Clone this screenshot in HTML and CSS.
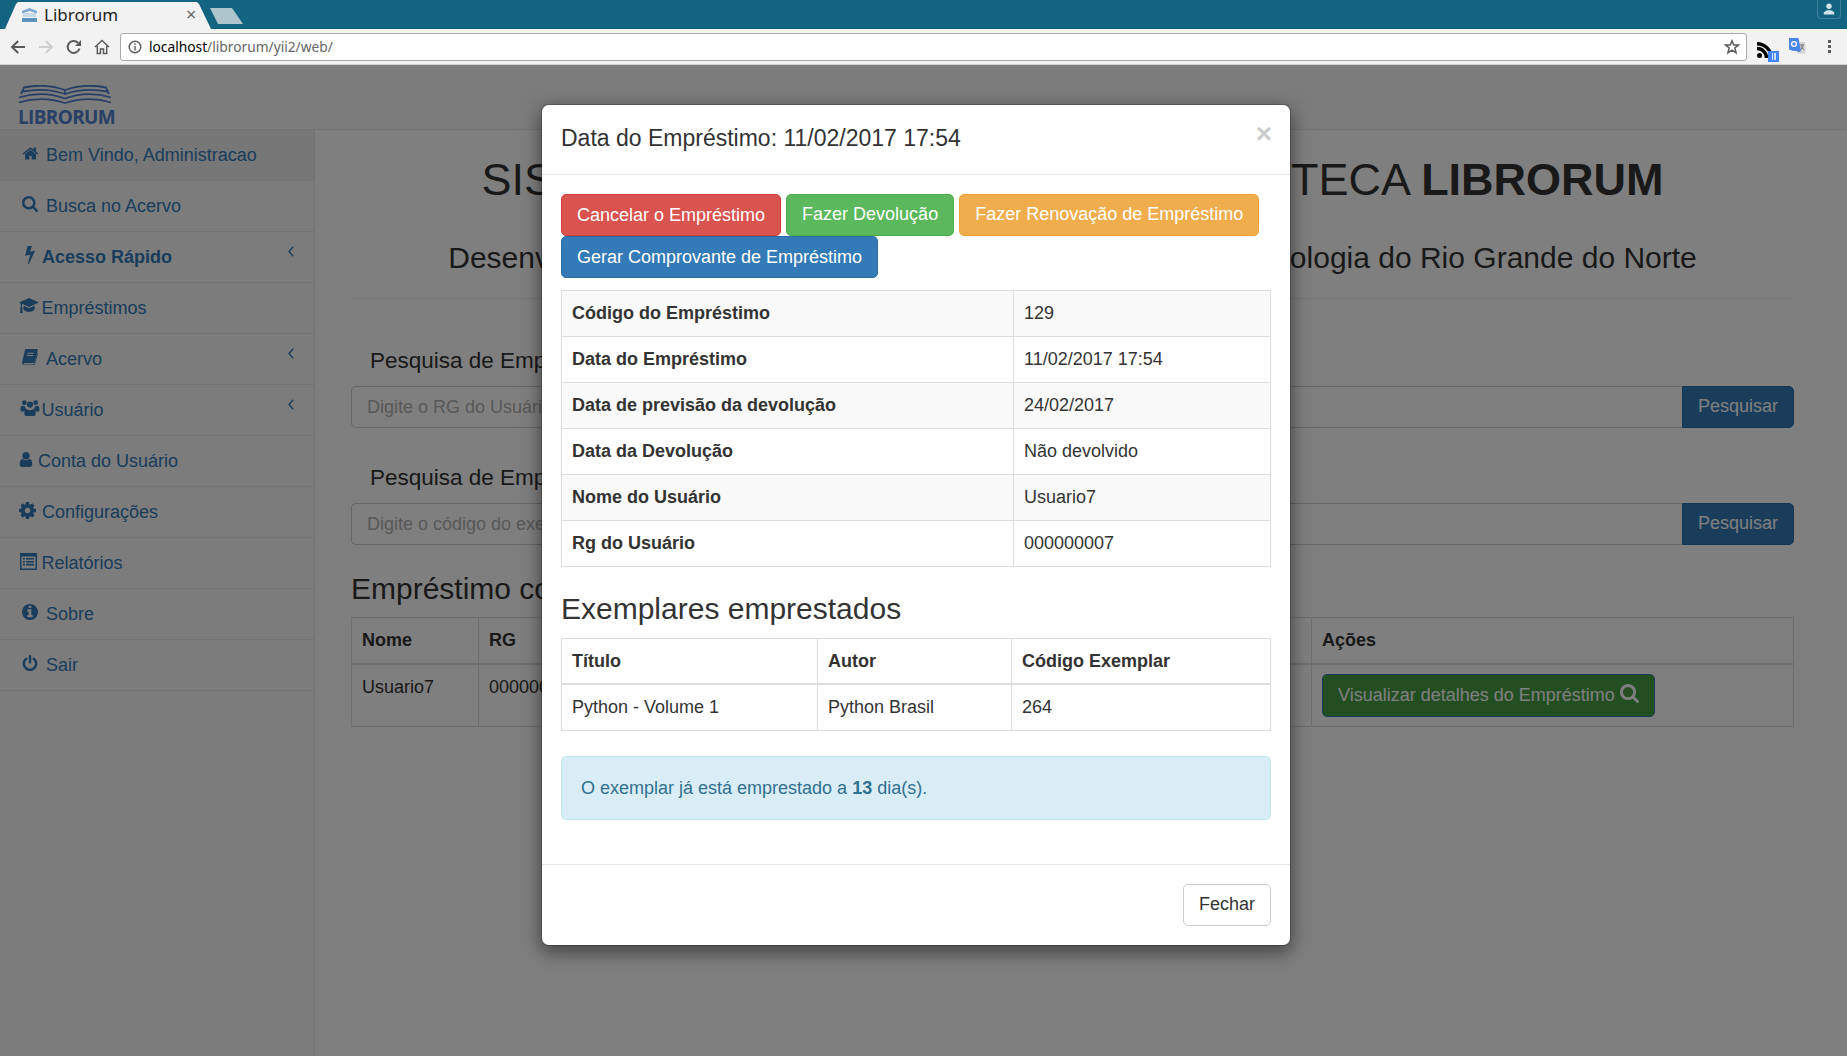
FILE: index.html
```html
<!DOCTYPE html>
<html lang="pt-BR">
<head>
<meta charset="utf-8">
<title>Librorum</title>
<link rel="stylesheet" href="styles.css">
</head>
<body>
<svg class="defs" width="0" height="0" aria-hidden="true">
  <symbol id="i-home" viewBox="0 0 1792 1792"><path d="M1472 992v480q0 26-19 45t-45 19h-384v-384h-256v384h-384q-26 0-45-19t-19-45v-480q0-1 .5-3t.5-3l575-474 575 474q1 2 1 6zm223-69l-62 74q-8 9-21 11h-3q-13 0-21-7l-692-577-692 577q-12 8-24 7-13-2-21-11l-62-74q-8-10-7-23.5t11-21.5l719-599q32-26 76-26t76 26l244 204v-195q0-14 9-23t23-9h192q14 0 23 9t9 23v408l219 182q10 8 11 21.5t-7 23.5z"/></symbol>
  <symbol id="i-search" viewBox="64 128 1664 1664"><path d="M1216 832q0-185-131.5-316.5t-316.5-131.5-316.5 131.5-131.5 316.5 131.5 316.5 316.5 131.5 316.5-131.5 131.5-316.5zm512 832q0 52-38 90t-90 38q-54 0-90-38l-343-342q-179 124-399 124-143 0-273.5-55.5t-225-150-150-225-55.5-273.5 55.5-273.5 150-225 225-150 273.5-55.5 273.5 55.5 225 150 150 225 55.5 273.5q0 220-124 399l343 343q37 37 37 90z"/></symbol>
  <symbol id="i-bolt" viewBox="440 120 910 1680"><path d="M1333 566q18 20 7 44l-540 1157q-13 25-42 25-4 0-14-2-17-5-25.5-19t-4.5-30l197-808-406 101q-4 1-12 1-18 0-31-11-18-15-13-39l201-825q4-14 16-23t28-9h328q19 0 32 12.5t13 29.5q0 8-5 18l-171 463 396-98q8-2 12-2 19 0 34 15z"/></symbol>
  <symbol id="i-cap" viewBox="0 0 20 16"><path d="M10 0 20 4.4 10 9 3.6 6 3 6.4V9.6c.5.2.7.6.7 1 0 .4-.2.7-.5.9L3.9 15H.9l.7-3.5c-.3-.2-.5-.5-.5-.9 0-.4.2-.8.6-1V5.600L0 4.400ZM4.600 7.700 10 10.200l5.500-2.500.2 2.900C15.700 12.400 13 14 10 14S4.400 12.400 4.400 10.600Z"/></symbol>
  <symbol id="i-book" viewBox="0 0 17 17"><path fill-rule="evenodd" d="M4.300 0H15.500C16.500 0 17 .8 16.700 1.700L13.500 13.300C13.100 14.500 12.200 15 11 15H2.500C1.900 15 1.500 15.300 1.500 15.700 1.500 16.200 2 16.400 2.500 16.400H11.500C12.300 16.400 13 16 13.300 15L16.300 4 17 4.500 14 15.300C13.700 16.300 12.800 17 11.700 17H2.300C1 17 0 16.200 0 15 0 14.500.1 14 .2 13.500L3 1.500C3.200.6 3.600 0 4.300 0ZM6 4 5.700 5H12.500L12.800 4ZM5.300 6.500 5 7.500H11.800L12.100 6.500Z"/></symbol>
  <symbol id="i-users" viewBox="0 0 20 17"><circle cx="4" cy="2.800" r="2.500"/><circle cx="16" cy="2.800" r="2.500"/><circle cx="10" cy="4.800" r="3.300"/><path d="M0 9.500C0 7.500.8 6 2.300 6.200 3 6.600 3.800 6.800 4.700 6.600 4.800 8 5.400 9 6.300 9.800 5 10.300 4.300 11.200 4 12.300H1.200C.4 12.300 0 11.600 0 10.500ZM20 9.500C20 7.500 19.200 6 17.700 6.200 17 6.600 16.200 6.800 15.300 6.600 15.200 8 14.600 9 13.700 9.800 15 10.300 15.700 11.200 16 12.300H18.800C19.600 12.300 20 11.600 20 10.500ZM6.500 9.700C7.500 10.500 8.700 10.900 10 10.900S12.500 10.500 13.500 9.700C15 9.700 16 11.300 16 14.300 16 16 15.300 17 14 17H6C4.700 17 4 16 4 14.300 4 11.300 5 9.700 6.500 9.700Z"/></symbol>
  <symbol id="i-user" viewBox="256 128 1280 1536"><path d="M1536 1399q0 109-62.5 187t-150.5 78h-854q-88 0-150.5-78t-62.5-187q0-85 8.5-160.5t31.5-152 58.5-131 94-89 134.5-34.5q131 128 313 128t313-128q76 0 134.5 34.500t94 89 58.500 131 31.500 152 8.500 160.500zm-256-887q0 159-112.500 271.500t-271.500 112.500-271.500-112.500-112.500-271.500 112.500-271.500 271.500-112.500 271.500 112.500 112.500 271.500z"/></symbol>
  <symbol id="i-cog" viewBox="128 128 1536 1536"><path d="M1152 896q0-106-75-181t-181-75-181 75-75 181 75 181 181 75 181-75 75-181zm512-109v222q0 12-8 23t-20 13l-185 28q-19 54-39 91 35 50 107 138 10 12 10 25t-9 23q-27 37-99 108t-94 71q-12 0-26-9l-138-108q-44 23-91 38-16 136-29 186-7 28-36 28h-222q-14 0-24.500-8.500t-11.500-21.500l-28-184q-49-16-90-37l-141 107q-10 9-25 9-14 0-25-11-126-114-165-168-7-10-7-23 0-12 8-23 15-21 51-66.500t54-70.500q-27-50-41-99l-183-27q-13-2-21-12.500t-8-23.500v-222q0-12 8-23t19-13l186-28q14-46 39-92-40-57-107-138-10-12-10-24 0-10 9-23 26-36 98.500-107.500t94.500-71.500q13 0 26 10l138 107q44-23 91-38 16-136 29-186 7-28 36-28h222q14 0 24.500 8.500t11.500 21.500l28 184q49 16 90 37l142-107q9-9 24-9 13 0 25 10 129 119 165 170 7 8 7 22 0 12-8 23-15 21-51 66.500t-54 70.500q26 50 41 98l183 28q13 2 21 12.500t8 23.500z"/></symbol>
  <symbol id="i-list" viewBox="0 0 17 17"><path fill-rule="evenodd" d="M0 0H17V17H0ZM1.500 3.500V15.500H15.500V3.500ZM3 5H5V6.600H3ZM6 5H14V6.600H6ZM3 7.900H5V9.500H3ZM6 7.900H14V9.500H6ZM3 10.800H5V12.400H3ZM6 10.800H14V12.400H6Z"/></symbol>
  <symbol id="i-info" viewBox="128 128 1536 1536"><path d="M1152 1376v-160q0-14-9-23t-23-9h-96v-512q0-14-9-23t-23-9h-320q-14 0-23 9t-9 23v160q0 14 9 23t23 9h96v320h-96q-14 0-23 9t-9 23v160q0 14 9 23t23 9h448q14 0 23-9t9-23zm-128-896v-160q0-14-9-23t-23-9h-192q-14 0-23 9t-9 23v160q0 14 9 23t23 9h192q14 0 23-9t9-23zm640 416q0 209-103 385.500t-279.500 279.500-385.500 103-385.500-103-279.500-279.500-103-385.500 103-385.500 279.500-279.500 385.500-103 385.500 103 279.500 279.500 103 385.500z"/></symbol>
  <symbol id="i-power" viewBox="128 0 1536 1664"><path d="M1664 896q0 156-61 298t-164 245-245 164-298 61-298-61-245-164-164-245-61-298q0-182 80.500-343t226.500-270q43-32 95.500-25t83.500 50q32 42 24.500 94.500t-49.500 84.500q-98 74-151.500 181t-53.500 228q0 104 40.500 198.500t109.500 163.500 163.500 109.500 198.500 40.500 198.500-40.500 163.500-109.500 109.500-163.500 40.500-198.500q0-121-53.500-228t-151.500-181q-42-32-49.500-84.500t24.500-94.500q31-43 84-50t95 25q146 109 226.500 270t80.500 343zm-640-768v640q0 52-38 90t-90 38-90-38-38-90v-640q0-52 38-90t90-38 90 38 38 90z"/></symbol>
  <symbol id="i-chev" viewBox="0 0 6 11"><path d="M5.200.7.900 5.500 5.200 10.300" fill="none" stroke="currentColor" stroke-width="1.300"/></symbol>
</svg>

<header class="chrome">
  <div class="tabstrip">
    <div class="tab">
      <svg class="favicon" viewBox="0 0 17 17"><path d="M1 5 8.500 2 16 5V7.500L8.500 5 1 7.500Z" fill="#7aa7cf"/><path d="M2 8H15M2 10H15" stroke="#9dbfdc" stroke-width="1.200"/><path d="M1 12H16V16H1Z" fill="#5f91bd"/></svg>
      <span class="tab-title">Librorum</span>
      <span class="tab-close">×</span>
    </div>
    <div class="newtab"></div>
    <div class="profile">
      <svg viewBox="0 0 12 12" width="12" height="12"><circle cx="6" cy="3.200" r="2.700" fill="#d3e2e8"/><path d="M.8 11.500V9.300L4 7.200H8L11.200 9.300V11.500Z" fill="#d3e2e8"/></svg>
    </div>
  </div>
  <div class="toolbar">
    <svg class="tb-ic tb-first" viewBox="0 0 16 16"><path d="M15 8H2.500M8.200 2 2 8l6.200 6" fill="none" stroke="#5a5a5a" stroke-width="2"/></svg>
    <svg class="tb-ic" viewBox="0 0 16 16"><path d="M1 8H13.500M7.800 2 14 8l-6.200 6" fill="none" stroke="#cfcfcf" stroke-width="2"/></svg>
    <svg class="tb-ic" viewBox="0 0 16 16"><path d="M13.500 9.500A6 6 0 1 1 12 3.700" fill="none" stroke="#5a5a5a" stroke-width="2"/><path d="M15 1V7H9Z" fill="#5a5a5a"/></svg>
    <svg class="tb-ic tb-home" viewBox="0 0 16 16"><path d="M1 8 8 1.500 15 8M3.300 7V14.500H6.500V10H9.500V14.500H12.700V7" fill="none" stroke="#5a5a5a" stroke-width="1.500"/></svg>
    <div class="omnibox">
      <svg class="omni-info" viewBox="0 0 14 14"><circle cx="7" cy="7" r="5.800" fill="none" stroke="#5a5a5a" stroke-width="1.400"/><path d="M6.300 6H7.700V10.500H6.300ZM6.300 3.300H7.700V4.800H6.300Z" fill="#5a5a5a"/></svg>
      <span class="url"><span class="url-host">localhost</span>/librorum/yii2/web/</span>
      <svg class="omni-star" viewBox="0 0 16 16"><path d="M8 1.800 9.800 6H14.500L10.800 9 12.100 13.800 8 11.100 3.900 13.800 5.200 9 1.500 6H6.200Z" fill="none" stroke="#5a5a5a" stroke-width="1.500"/></svg>
    </div>
    <div class="ext-rss">
      <svg viewBox="0 0 16 16" width="16" height="16"><circle cx="2.500" cy="13.500" r="2.500"/><path d="M0 6.500A9.500 9.500 0 0 1 9.500 16M0 1.700A14.300 14.300 0 0 1 14.300 16" fill="none" stroke="#000" stroke-width="3.400"/></svg>
      <span class="ext-badge"><span class="ext-bar"></span><span class="ext-bar"></span></span>
    </div>
    <svg class="ext-tr" viewBox="0 0 17 17"><path d="M9 4H16.500V15.500H9Z" fill="#d5d5d5"/><path d="M11 7H15M13 6V7.500M11.500 12 14.500 7.500M12 8 15 12" stroke="#777" fill="none"/><path d="M0 0H9.500L12 13H4.500L0 11.500Z" fill="#4a86e8"/><path d="M8 14.500 9 13H12Z" fill="#3568b8"/><circle cx="5" cy="6" r="2.400" fill="none" stroke="#fff" stroke-width="1.300"/></svg>
    <div class="menu-dots"><i></i><i></i><i></i></div>
  </div>
</header>

<div class="app">
  <div class="navbar">
    <div class="logo">
      <svg class="logo-book" viewBox="0 0 94 19"><path d="M3 9 6 2.500C20-.5 34 .5 47 5 60 .5 74-.5 88 2.500L91 9M47 5V9M5 6.500C20 3.500 34 4.500 47 9 60 4.500 74 3.500 89 6.500M1 12.500C16 8 33 8.500 47 13.500 61 8.500 78 8 93 12.500" fill="none" stroke="#5080cc" stroke-width="1.800"/><path d="M1 17.500C16 13 33 13.500 47 18 61 13.500 78 13 93 17.500" fill="none" stroke="#5080cc" stroke-width="1.800"/></svg>
      <span class="logo-text">LIBRORUM</span>
    </div>
  </div>
  <div class="layout">
    <nav class="sidebar">
      <a class="nav-item nav-active"><svg class="ic ic-home"><use href="#i-home"/></svg>Bem Vindo, Administracao</a>
      <a class="nav-item"><svg class="ic ic-search"><use href="#i-search"/></svg>Busca no Acervo</a>
      <a class="nav-item nav-bold"><svg class="ic ic-bolt"><use href="#i-bolt"/></svg>Acesso Rápido<svg class="chev"><use href="#i-chev"/></svg></a>
      <a class="nav-item"><svg class="ic ic-cap"><use href="#i-cap"/></svg>Empréstimos</a>
      <a class="nav-item"><svg class="ic ic-book"><use href="#i-book"/></svg>Acervo<svg class="chev"><use href="#i-chev"/></svg></a>
      <a class="nav-item"><svg class="ic ic-users"><use href="#i-users"/></svg>Usuário<svg class="chev"><use href="#i-chev"/></svg></a>
      <a class="nav-item"><svg class="ic ic-user"><use href="#i-user"/></svg>Conta do Usuário</a>
      <a class="nav-item"><svg class="ic ic-cog"><use href="#i-cog"/></svg>Configurações</a>
      <a class="nav-item"><svg class="ic ic-list"><use href="#i-list"/></svg>Relatórios</a>
      <a class="nav-item"><svg class="ic ic-info"><use href="#i-info"/></svg>Sobre</a>
      <a class="nav-item"><svg class="ic ic-power"><use href="#i-power"/></svg>Sair</a>
    </nav>
    <main class="main">
      <h1 class="title"><span class="title-lead">SISTEMA GERENCIADOR DE </span>BIBLIOTECA <b>LIBRORUM</b></h1>
      <h3 class="subtitle">Desenvolvido no Instituto Federal de Educação, Ciência e Tecnologia do Rio Grande do Norte</h3>
      <hr class="rule">
      <h4 class="search-label">Pesquisa de Empréstimo por RG</h4>
      <div class="search-group">
        <input class="search-input" placeholder="Digite o RG do Usuário">
        <button class="search-btn">Pesquisar</button>
      </div>
      <h4 class="search-label search-label-2">Pesquisa de Empréstimo por Exemplar</h4>
      <div class="search-group">
        <input class="search-input" placeholder="Digite o código do exemplar">
        <button class="search-btn">Pesquisar</button>
      </div>
      <h3 class="loan-title">Empréstimo com o Usuário</h3>
      <table class="bg-table">
        <colgroup><col class="c-nome"><col class="c-rg"><col class="c-mid"><col class="c-acoes"></colgroup>
        <thead><tr><th>Nome</th><th>RG</th><th>Data</th><th>Ações</th></tr></thead>
        <tbody><tr><td>Usuario7</td><td>000000007</td><td>11/02/2017</td><td class="td-action"><button class="view-btn">Visualizar detalhes do Empréstimo <svg class="view-ic"><use href="#i-search"/></svg></button></td></tr></tbody>
      </table>
    </main>
  </div>

  <div class="backdrop">
    <section class="modal">
      <div class="modal-header">
        <h4 class="modal-title">Data do Empréstimo: 11/02/2017 17:54</h4>
        <span class="close">×</span>
      </div>
      <div class="modal-body">
        <div class="actions">
          <button class="btn btn-danger">Cancelar o Empréstimo</button>
          <button class="btn btn-success">Fazer Devolução</button>
          <button class="btn btn-warning">Fazer Renovação de Empréstimo</button>
          <button class="btn btn-primary">Gerar Comprovante de Empréstimo</button>
        </div>
        <table class="tbl tbl-detail">
          <colgroup><col class="c-key"><col></colgroup>
          <tbody>
            <tr><th>Código do Empréstimo</th><td>129</td></tr>
            <tr><th>Data do Empréstimo</th><td>11/02/2017 17:54</td></tr>
            <tr><th>Data de previsão da devolução</th><td>24/02/2017</td></tr>
            <tr><th>Data da Devolução</th><td>Não devolvido</td></tr>
            <tr><th>Nome do Usuário</th><td>Usuario7</td></tr>
            <tr><th>Rg do Usuário</th><td>000000007</td></tr>
          </tbody>
        </table>
        <h3 class="modal-h3">Exemplares emprestados</h3>
        <table class="tbl tbl-copies">
          <colgroup><col class="c-titulo"><col class="c-autor"><col></colgroup>
          <thead><tr><th>Título</th><th>Autor</th><th>Código Exemplar</th></tr></thead>
          <tbody><tr><td>Python - Volume 1</td><td>Python Brasil</td><td>264</td></tr></tbody>
        </table>
        <div class="alert">O exemplar já está emprestado a <b>13</b> dia(s).</div>
      </div>
      <div class="modal-footer">
        <button class="btn btn-default">Fechar</button>
      </div>
    </section>
  </div>
</div>
</body>
</html>
```

FILE: styles.css
```css
* { box-sizing: border-box; }
html, body { margin: 0; height: 100%; }
body {
  width: 1847px;
  height: 1056px;
  overflow: hidden;
  background: #fff;
  color: #333;
  font-family: "Liberation Sans", Arial, sans-serif;
  font-size: 18px;
  line-height: 25px;
  display: flex;
  flex-direction: column;
}
.defs { position: absolute; }

/* browser chrome */
.chrome { height: 65px; flex: none; font-family: "Noto Sans", sans-serif; }
.tabstrip { height: 29px; background: #136480; display: flex; align-items: flex-end; padding-left: 5px; }
.tab {
  width: 206px; height: 27px; background: #f2f2f2;
  clip-path: polygon(0 100%, 11px 2px, 13px 0, 192px 0, 194px 2px, 100% 100%);
  display: flex; align-items: center; padding: 0 0 2px 16px;
}
.favicon { width: 17px; height: 17px; flex: none; }
.tab-title { margin-left: 6px; font-size: 17px; color: #222; width: 142px; }
.tab-close { font-size: 18px; color: #666; }
.newtab { width: 33px; height: 16px; margin: 0 0 5px -1px; background: #afc5ce; clip-path: polygon(0 0, 22px 0, 33px 100%, 8px 100%); }
.profile {
  margin: 0 6px 0 auto; align-self: flex-start; width: 24px; height: 19px;
  border: 1px solid #3f8098; border-top: 0; border-radius: 0 0 4px 4px;
  display: flex; align-items: center; justify-content: center;
}
.toolbar { height: 36px; background: #f2f2f2; border-bottom: 1px solid #d0d0d0; display: flex; align-items: center; }
.tb-ic { width: 16px; height: 16px; margin-right: 12px; flex: none; }
.tb-first { margin-left: 10px; }
.tb-home { margin-right: 10px; }
.omnibox {
  width: 1627px; height: 28px; background: #fff; border: 1px solid #aaa; border-radius: 3px;
  display: flex; align-items: center; padding-left: 7px; flex: none;
}
.omni-info { width: 14px; height: 14px; flex: none; }
.url { margin-left: 7px; font-size: 13.750px; color: #666; flex: 1; white-space: nowrap; line-height: 18px; }
.url-host { color: #000; }
.omni-star { width: 16px; height: 16px; margin-right: 6px; flex: none; }
.ext-rss { position: relative; width: 16px; height: 16px; margin-left: 10px; flex: none; }
.ext-badge { position: absolute; left: 11px; top: 12px; width: 11px; height: 11px; background: #4285f4; display: flex; gap: 1px; justify-content: center; align-items: center; }
.ext-bar { width: 1.500px; height: 7px; background: #cfe0fb; }
.ext-tr { width: 17px; height: 17px; margin-left: 16px; flex: none; }
.menu-dots { margin-left: 22px; display: flex; flex-direction: column; gap: 2px; }
.menu-dots i { width: 3px; height: 3px; background: #5a5a5a; display: block; }

/* app */
.app { position: relative; flex: 1; display: flex; flex-direction: column; min-height: 0; }
.navbar { height: 65px; flex: none; background: #f8f8f8; border-bottom: 1px solid #e7e7e7; padding: 20px 0 0 18px; }
.logo { width: 96px; display: flex; flex-direction: column; }
.logo-book { width: 94px; height: 19px; display: block; }
.logo-text { font-family: "Open Sans", sans-serif; font-weight: 700; font-size: 19px; line-height: 14px; color: #5080cc; margin-top: 6px; letter-spacing: -.65px; white-space: nowrap; }
.layout { flex: 1; display: flex; min-height: 0; }
.sidebar { width: 315px; flex: none; background: #f8f8f8; border-right: 1px solid #e7e7e7; }
.nav-item { height: 51px; display: flex; align-items: center; border-bottom: 1px solid #e7e7e7; color: #337ab7; white-space: nowrap; }
.nav-active { background: #eee; }
.nav-bold { font-weight: 700; }
.ic { fill: #337ab7; flex: none; height: 16px; width: 16px; margin-top: -4px; }
.ic-home { width: 17px; height: 17px; margin-left: 22px; margin-right: 7px; }
.ic-search { margin-left: 22px; margin-right: 8px; }
.ic-bolt { width: 10px; height: 18px; margin-left: 25px; margin-right: 7px; }
.ic-cap { width: 20px; margin-left: 19px; margin-right: 2.500px; }
.ic-book { margin-left: 22px; margin-right: 8px; }
.ic-users { width: 20px; margin-left: 20px; margin-right: 1.500px; }
.ic-user { width: 14px; height: 15px; margin-left: 19px; margin-right: 5px; }
.ic-cog { width: 17px; height: 17px; margin-left: 19px; margin-right: 6px; }
.ic-list { width: 17px; height: 17px; margin-left: 20px; margin-right: 4.500px; }
.ic-info { margin-left: 22px; margin-right: 8px; }
.ic-power { margin-left: 22px; margin-right: 8px; }
.chev { width: 6px; height: 11px; color: #337ab7; margin-left: auto; margin-right: 20px; margin-bottom: 11px; }

.main { flex: 1; min-width: 0; padding: 0 53px 0 36px; }
.title { font-size: 45px; line-height: 50px; font-weight: 400; text-align: center; margin: 25px 0 0; white-space: nowrap; }
.title-lead { word-spacing: 11.500px; }
.subtitle { font-size: 30px; line-height: 33px; font-weight: 400; text-align: center; margin: 36px 0 0; white-space: nowrap; }
.rule { border: 0; border-top: 1px solid #eee; margin: 24px 0 0; }
.search-label { font-size: 22.500px; line-height: 25px; font-weight: 400; margin: 49px 0 0 19px; }
.search-label-2 { margin-top: 0; padding-top: 37px; }
.search-group { display: flex; height: 42px; margin-top: 13px; }
.search-input {
  flex: 1; min-width: 0; border: 1px solid #ccc; border-right: 0; border-radius: 5px 0 0 5px; padding: 0 15px; font: inherit; color: #555; background: #fff;
}
.search-input::placeholder { color: #b0b0b0; opacity: 1; }
.search-btn { width: 112px; border: 1px solid #2e6da4; background: #337ab7; color: #fff; font: inherit; border-radius: 0 5px 5px 0; padding: 0 0 1px; }
.loan-title { font-size: 30px; line-height: 33px; font-weight: 400; margin: 27px 0 0; white-space: nowrap; }
.bg-table { width: 100%; border-collapse: collapse; table-layout: fixed; margin-top: 11.500px; }
.bg-table th, .bg-table td { border: 1px solid #ddd; padding: 10px; text-align: left; vertical-align: top; }
.bg-table thead th { border-bottom-width: 2px; }
.bg-table .td-action { padding: 9.500px 10px 9px; }
.c-nome { width: 127px; }
.c-rg { width: 240px; }
.c-acoes { width: 482px; }
.view-btn { display: inline-flex; align-items: center; height: 43px; padding: 0 15px; border: 1px solid #337ab7; border-radius: 5px; background: #449d44; color: #fff; font: inherit; white-space: pre; }
.view-ic { width: 19px; height: 19px; fill: #fff; margin: -4px 0 0 0; }

/* modal */
.backdrop { position: absolute; inset: 0; background: rgba(0,0,0,.5); padding: 39px 0 0 541px; }
.modal { width: 750px; background: #fff; border: 1px solid rgba(0,0,0,.2); background-clip: padding-box; border-radius: 7.500px; box-shadow: 0 6px 19px rgba(0,0,0,.5); }
.modal-header { height: 70px; padding: 0 19px; border-bottom: 1px solid #e5e5e5; display: flex; align-items: center; justify-content: space-between; }
.modal-title { margin: -4px 0 0; font-size: 23px; line-height: 32px; font-weight: 400; }
.close { font-size: 28px; font-weight: 700; color: #000; opacity: .2; margin: -12px -1px 0 0; line-height: 26px; }
.modal-body { padding: 19px; }
.actions { display: flex; flex-wrap: wrap; column-gap: 5px; }
.btn { height: 42px; padding: 0 15px; border: 1px solid transparent; border-radius: 5px; font: inherit; color: #fff; white-space: nowrap; }
.btn-danger { background: #d9534f; border-color: #d43f3a; }
.btn-success { background: #5cb85c; border-color: #4cae4c; padding-bottom: 2px; }
.btn-warning { background: #f0ad4e; border-color: #eea236; padding-bottom: 2px; }
.btn-primary { background: #337ab7; border-color: #2e6da4; }
.btn-default { background: #fff; border-color: #ccc; color: #333; }
.tbl { width: 100%; border-collapse: collapse; table-layout: fixed; }
.tbl th, .tbl td { border: 1px solid #ddd; padding: 10px; text-align: left; }
.tbl-detail { margin-top: 12px; }
.tbl-detail tr:nth-child(odd) { background: #f9f9f9; }
.tbl-copies thead th { border-bottom-width: 2px; padding-bottom: 9px; }
.c-key { width: 452px; }
.c-titulo { width: 256px; }
.c-autor { width: 194px; }
.modal-h3 { font-size: 30px; line-height: 33px; font-weight: 400; margin: 24.500px 0 13px; }
.alert { margin: 25px 0; padding: 19.500px 19px 17.500px; border: 1px solid #bce8f1; border-radius: 5px; background: #d9edf7; color: #31708f; }
.modal-footer { padding: 19px; border-top: 1px solid #e5e5e5; display: flex; justify-content: flex-end; }
```
